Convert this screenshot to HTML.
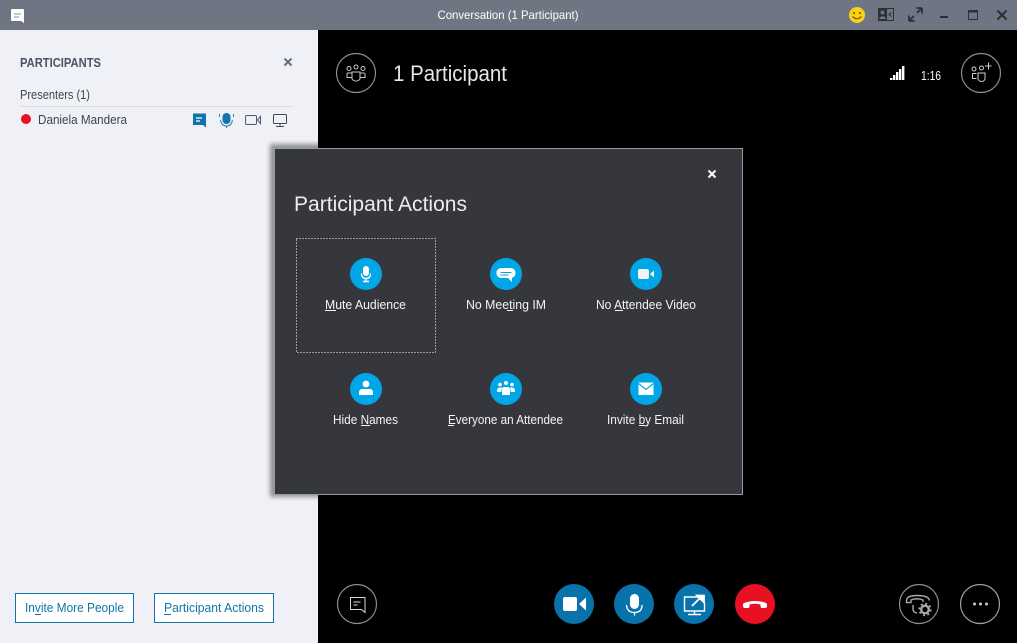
<!DOCTYPE html>
<html><head><meta charset="utf-8"><title>Conversation</title>
<style>
html,body{margin:0;padding:0;background:#000;width:1017px;height:643px;overflow:hidden}
svg{display:block}
text{font-family:"Liberation Sans",sans-serif}
</style></head><body>
<svg width="1017" height="643" viewBox="0 0 1017 643" xmlns="http://www.w3.org/2000/svg">
<defs><filter id="sh" x="-5%" y="-5%" width="110%" height="110%"><feGaussianBlur stdDeviation="2.5"/></filter></defs>
<rect width="1017" height="643" fill="#000"/>
<rect width="318" height="643" fill="#eff1f6"/>
<rect width="1017" height="30" fill="#6f7583"/>

<!-- title bar -->
<path d="M12 9h11a1 1 0 0 1 1 1v13l-3-2h-9a1 1 0 0 1-1-1V10a1 1 0 0 1 1-1z" fill="#fff"/>
<path d="M14 14h7M14 17h5" stroke="#8a8f9b" stroke-width="1"/>
<text x="437.500" y="19" font-size="12" fill="#fff" textLength="141" lengthAdjust="spacingAndGlyphs">Conversation (1 Participant)</text>
<circle cx="857" cy="15" r="8" fill="#fcd116"/><circle cx="854" cy="13" r="1" fill="#5a4a00"/><circle cx="860" cy="13" r="1" fill="#5a4a00"/>
<path d="M852.500 16.500q4.500 4.500 9 0" fill="none" stroke="#5a4a00" stroke-width="1"/>
<rect x="878" y="8" width="16" height="13" fill="#2c2f38"/><rect x="887" y="9" width="6" height="11" fill="#6f7583"/>
<circle cx="882.500" cy="12.500" r="2" fill="#6f7583"/><path d="M879.500 19v-1.500q3-2.500 6 0V19z" fill="#6f7583"/>
<path d="M891.500 12.500l-2.500 2 2.500 2" fill="none" stroke="#2c2f38" stroke-width="1"/>
<path d="M909 21v-5.500M909 21h5.500M909 21l5-5M922 8v5.500M922 8h-5.500M922 8l-5 5" fill="none" stroke="#2c2f38" stroke-width="1.800"/>
<rect x="940" y="16" width="8" height="2" fill="#2c2f38"/>
<rect x="968.500" y="10.500" width="9" height="9" fill="none" stroke="#2c2f38"/><rect x="968" y="10" width="10" height="2.500" fill="#2c2f38"/>
<path d="M997.500 10.500l9 9M1006.500 10.500l-9 9" stroke="#2c2f38" stroke-width="2"/>

<!-- left panel -->
<text x="20" y="67" font-size="12.500" font-weight="bold" fill="#4c5264" textLength="81" lengthAdjust="spacingAndGlyphs">PARTICIPANTS</text>
<path d="M284.500 58.500l7 7M291.500 58.500l-7 7" stroke="#6a6e7a" stroke-width="2"/>
<text x="20" y="99" font-size="12.500" fill="#40444f" textLength="70" lengthAdjust="spacingAndGlyphs">Presenters (1)</text>
<rect x="20" y="106" width="274" height="1" fill="#dcdee3"/>
<circle cx="26" cy="119" r="5" fill="#e81123"/>
<text x="38" y="124" font-size="12.500" fill="#3d4354" textLength="89" lengthAdjust="spacingAndGlyphs">Daniela Mandera</text>
<path d="M193 113.500h13v14l-3-2.500h-10z" fill="#0f75aa"/><path d="M196 118h6M196 121h4" stroke="#fff" stroke-width="1.200"/>
<rect x="222.500" y="113" width="8" height="11" rx="4" fill="#0f75aa"/>
<path d="M220.500 120q1 6 6 6t6-6M226.500 126v2M219.500 114v3M233.500 114v3" fill="none" stroke="#2a87ba" stroke-width="1"/>
<rect x="245.500" y="115.500" width="11" height="9" rx="1.500" fill="none" stroke="#4f5870"/><path d="M260.500 116.500v7l-3-3.500z" fill="none" stroke="#4f5870"/>
<rect x="273.500" y="114.500" width="13" height="9" rx="1" fill="none" stroke="#3f475c"/><path d="M280 124v2M276 126.500h8" stroke="#3f475c"/>

<rect x="15.500" y="593.500" width="118" height="29" fill="#fff" stroke="#0f75aa"/>
<text x="25" y="612" font-size="12.500" fill="#0f75aa" textLength="99" lengthAdjust="spacingAndGlyphs">Invite More People</text>
<rect x="35" y="614" width="6" height="1" fill="#0f75aa"/>
<rect x="154.500" y="593.500" width="119" height="29" fill="#fff" stroke="#0f75aa"/>
<text x="164" y="612" font-size="12.500" fill="#0f75aa" textLength="100" lengthAdjust="spacingAndGlyphs">Participant Actions</text>
<rect x="164" y="614" width="7" height="1" fill="#0f75aa"/>

<!-- stage header -->
<circle cx="356" cy="73" r="19.500" fill="none" stroke="#8c8c8c" stroke-width="1.200"/>
<g fill="none" stroke="#c8c8c8" stroke-width="1">
<circle cx="349" cy="68.500" r="2"/><circle cx="356" cy="67" r="2"/><circle cx="363" cy="68.500" r="2"/>
<path d="M347 73h4.500M364.500 73h-4M347 73v4.500h4.500M365 73v4.500h-4.500M352 72h8v7q-1.500 2-4 2t-4-2z"/>
</g>
<text x="393" y="81" font-size="22" fill="#e8e8e8" textLength="114" lengthAdjust="spacingAndGlyphs">1 Participant</text>
<g fill="#fff"><rect x="890" y="78" width="2.400" height="2"/><rect x="893" y="75" width="2.400" height="5"/><rect x="896" y="72" width="2.400" height="8"/><rect x="899" y="69" width="2.400" height="11"/><rect x="902" y="66" width="2.400" height="14"/></g>
<text x="921" y="80" font-size="13" fill="#fff" textLength="20" lengthAdjust="spacingAndGlyphs">1:16</text>
<circle cx="981" cy="73" r="19.500" fill="none" stroke="#8c8c8c" stroke-width="1.200"/>
<g fill="none" stroke="#d0d0d0" stroke-width="1">
<circle cx="974" cy="69" r="2"/><circle cx="981.500" cy="68" r="2"/>
<path d="M972.500 73.500h4M972.500 73.500v5h4M978 73h7v6q-1 2.500-3.500 2.500T978 79zM985 66h6.500M988.500 62.500v7"/>
</g>

<!-- dialog -->
<rect x="270" y="144" width="476" height="353" fill="#000" opacity=".4" filter="url(#sh)"/>
<rect x="274" y="148" width="469" height="347" fill="#36373c"/>
<rect x="274.500" y="148.500" width="468" height="346" fill="none" stroke="#96999f"/>
<path d="M708.500 170.500l7 7M715.500 170.500l-7 7" stroke="#fff" stroke-width="2"/>
<text x="294" y="211" font-size="21" fill="#ececec" textLength="173" lengthAdjust="spacingAndGlyphs">Participant Actions</text>
<rect x="296.500" y="238.500" width="139" height="114" fill="none" stroke="#fff" stroke-dasharray="1 2" shape-rendering="crispEdges"/>

<g fill="#00a7e7"><circle cx="366" cy="274" r="16"/><circle cx="506" cy="274" r="16"/><circle cx="646" cy="274" r="16"/><circle cx="366" cy="389" r="16"/><circle cx="506" cy="389" r="16"/><circle cx="646" cy="389" r="16"/></g>

<!-- mic -->
<rect x="363" y="266" width="6" height="10" rx="3" fill="#fff"/>
<path d="M361.500 273.500q0 5 4.500 5t4.500-5M366 278v3M363 281.500h6" fill="none" stroke="#fff" stroke-width="1.400"/>
<!-- chat -->
<path d="M501 268h10a4.500 4.500 0 0 1 4.500 4.500v1a4.500 4.500 0 0 1-3.500 4.300V282l-4-4h-7a4.500 4.500 0 0 1-4.500-4.500v-1A4.500 4.500 0 0 1 501 268z" fill="#fff"/>
<path d="M500.500 272.500h11M500.500 275h8" stroke="#00a7e7" stroke-width="1"/>
<!-- video -->
<rect x="638" y="269" width="11" height="10" rx="2" fill="#f3f3f3"/><path d="M650 274l4-3.500v7z" fill="#f3f3f3"/>
<!-- person -->
<circle cx="366" cy="384" r="3.400" fill="#fff"/><path d="M359 395v-2.500q0-3.500 3.500-3.500h7q3.500 0 3.500 3.500v2.500z" fill="#fff"/>
<!-- group -->
<g fill="#fff"><circle cx="500" cy="384.500" r="1.800"/><circle cx="506" cy="383" r="2"/><circle cx="512" cy="384.500" r="1.800"/>
<path d="M497 392v-1q0-3 2.500-3.500h2.500l-.8 4.500zM515 392v-1q0-3-2.500-3.500H510l.8 4.500zM502 395v-5q0-3 2-3h4q2 0 2 3v5z"/></g>
<!-- mail -->
<rect x="638.500" y="382.500" width="15" height="12.500" fill="#fff"/><path d="M638.500 383.500l7.500 6 7.500-6" fill="none" stroke="#00a7e7" stroke-width="1.200"/>

<g font-size="12.500" fill="#f4f4f4">
<text x="325" y="309" textLength="81" lengthAdjust="spacingAndGlyphs">Mute Audience</text>
<text x="466" y="309" textLength="80" lengthAdjust="spacingAndGlyphs">No Meeting IM</text>
<text x="596" y="309" textLength="100" lengthAdjust="spacingAndGlyphs">No Attendee Video</text>
<text x="333" y="424" textLength="65" lengthAdjust="spacingAndGlyphs">Hide Names</text>
<text x="448" y="424" textLength="115" lengthAdjust="spacingAndGlyphs">Everyone an Attendee</text>
<text x="607" y="424" textLength="77" lengthAdjust="spacingAndGlyphs">Invite by Email</text>
</g>
<g fill="#f4f4f4"><rect x="325" y="310" width="11" height="1"/><rect x="507" y="310" width="6" height="1"/><rect x="615" y="310" width="8" height="1"/><rect x="361" y="425" width="9" height="1"/><rect x="448" y="425" width="6" height="1"/><rect x="639" y="425" width="6.500" height="1"/></g>

<!-- bottom bar -->
<circle cx="357" cy="604" r="19.500" fill="none" stroke="#8c8c8c" stroke-width="1.200"/>
<path d="M350.500 597.500h14.500v15l-3.500-3h-11z" fill="none" stroke="#d8d8d8" stroke-width="1"/><path d="M353.500 602h7M353.500 605h4" stroke="#d8d8d8"/>

<circle cx="574" cy="604" r="20" fill="#0872aa"/>
<rect x="563" y="597" width="14" height="14" rx="2" fill="#fff"/><path d="M579 604l7-6.500v13z" fill="#fff"/>
<circle cx="634" cy="604" r="20" fill="#0872aa"/>
<rect x="630" y="594" width="9" height="15" rx="4.500" fill="#fff"/>
<path d="M626.500 605q.5 7.500 8 7.500t7.500-7.500M634.500 612v3.500" fill="none" stroke="#fff" stroke-width="1.300"/>
<circle cx="694" cy="604" r="20" fill="#0872aa"/>
<path d="M698 597h-13.500v14h20v-8M694.500 611v3M688 614.500h13" fill="none" stroke="#fff" stroke-width="1.400"/>
<path d="M692 606l10-10M697 595.500h7v7z" stroke="#fff" stroke-width="1.800" fill="#fff"/>
<circle cx="755" cy="604" r="20" fill="#e81123"/>
<path d="M743 606v-1.500q0-1 1-1.500 11-4 22 0 1 .5 1 1.500v1.500q0 2-2 2h-3q-1.500 0-1.500-2v-1.500q-5.500-1.500-11 0V606q0 2-1.500 2h-3q-2 0-2-2z" fill="#fff"/>

<circle cx="919" cy="604" r="19.500" fill="none" stroke="#8c8c8c" stroke-width="1.200"/>
<path d="M906.500 600.500q0-5 11-5t12 5M906.500 600.500v2h4.500v-2.500q6-2.500 12 0v2M913 605v4q0 3.500 4 4" fill="none" stroke="#a8a8a8" stroke-width="1.400"/>
<circle cx="925" cy="609.500" r="3.800" fill="none" stroke="#a8a8a8" stroke-width="2.400"/>
<circle cx="925" cy="609.500" r="5.800" fill="none" stroke="#a8a8a8" stroke-width="1.800" stroke-dasharray="2 2.550"/>

<circle cx="980" cy="604" r="19.500" fill="none" stroke="#a0a0a0" stroke-width="1.200"/>
<g fill="#c8c8c8"><circle cx="974.500" cy="604" r="1.500"/><circle cx="980.500" cy="604" r="1.500"/><circle cx="986.500" cy="604" r="1.500"/></g>
</svg>
</body></html>
